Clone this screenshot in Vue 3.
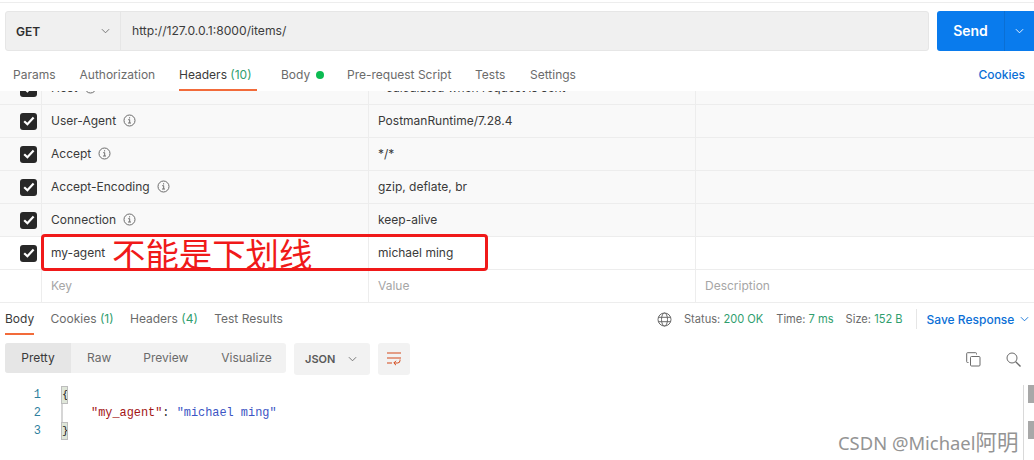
<script setup>
const tabs = [
  { label: 'Params', w: 66.5 },
  { label: 'Authorization', w: 99.5 },
  { label: 'Headers', count: '(10)', active: true, w: 102 },
  { label: 'Body', dot: true, w: 66 },
  { label: 'Pre-request Script', w: 128 },
  { label: 'Tests', w: 55 },
  { label: 'Settings', w: 60 }
]
const rows = [
  { key: 'Host', value: '<calculated when request is sent>', info: true },
  { key: 'User-Agent', value: 'PostmanRuntime/7.28.4', info: true },
  { key: 'Accept', value: '*/*', info: true },
  { key: 'Accept-Encoding', value: 'gzip, deflate, br', info: true },
  { key: 'Connection', value: 'keep-alive', info: true },
  { key: 'my-agent', value: 'michael ming', white: true }
]
</script>

<template>
  <div class="page">
    <div class="topline"></div>
    <div class="urlrow">
      <div class="urlbox">
        <div class="method">
          <span>GET</span>
          <svg class="chev" width="9" height="6" viewBox="0 0 10 6"><path d="M1 1l4 4 4-4" fill="none" stroke="#6b6b6b" stroke-width="1"/></svg>
        </div>
        <div class="url">http://127.0.0.1:8000/items/</div>
      </div>
      <div class="send">
        <span class="sendlabel">Send</span>
        <span class="sendarrow">
          <svg width="9" height="6" viewBox="0 0 10 6"><path d="M1 1l4 4 4-4" fill="none" stroke="#fff" stroke-width="1"/></svg>
        </span>
      </div>
    </div>

    <div class="tabs">
      <div v-for="t in tabs" :key="t.label" class="tab" :class="{ active: t.active }" :style="{ width: t.w + 'px' }">
        <span>{{ t.label }}</span>
        <span v-if="t.count" class="count">&nbsp;{{ t.count }}</span>
        <span v-if="t.dot" class="dot"></span>
      </div>
      <div class="cookies">Cookies</div>
    </div>

    <div class="tablewrap">
      <div class="table">
        <div v-for="r in rows" :key="r.key" class="row" :class="{ white: r.white }">
          <div class="c0"><span class="check"><svg width="12" height="10" viewBox="0 0 12 10"><path d="M1.2 5.2l3.2 3 6.2-6.6" fill="none" stroke="#fff" stroke-width="2.2"/></svg></span></div>
          <div class="c1">
            <span>{{ r.key }}</span>
            <svg v-if="r.info" class="info" width="13" height="13" viewBox="0 0 13 13"><circle cx="6.5" cy="6.5" r="5.5" fill="none" stroke="#6b6b6b"/><path d="M5.2 5.7h1.5v3.2M5 9h3" fill="none" stroke="#6b6b6b"/><rect x="6" y="3.3" width="1.1" height="1.1" fill="#6b6b6b"/></svg>
          </div>
          <div class="c2">{{ r.value }}</div>
          <div class="c3"></div>
        </div>
        <div class="row white ghost">
          <div class="c0"></div>
          <div class="c1">Key</div>
          <div class="c2">Value</div>
          <div class="c3">Description</div>
        </div>
      </div>
      <div class="redbox"></div>
      <div class="redtext">不能是下划线</div>
    </div>

    <div class="restabs">
      <div class="rtab active">Body</div>
      <div class="rtab">Cookies <span class="count">(1)</span></div>
      <div class="rtab">Headers <span class="count">(4)</span></div>
      <div class="rtab">Test Results</div>
      <div class="meta">
        <svg class="globe" width="15" height="15" viewBox="0 0 15 15" fill="none" stroke="#6b6b6b"><circle cx="7.5" cy="7.5" r="6.5"/><ellipse cx="7.5" cy="7.5" rx="3" ry="6.5"/><path d="M1.3 5.3h12.4M1.3 9.7h12.4"/></svg>
        <span class="m m1">Status: <b>200 OK</b></span>
        <span class="m m2">Time: <b>7 ms</b></span>
        <span class="m m3">Size: <b>152 B</b></span>
        <span class="sep"></span>
        <span class="save">Save Response</span>
        <svg width="9" height="6" viewBox="0 0 10 6"><path d="M1 1l4 4 4-4" fill="none" stroke="#0b6fd6" stroke-width="1"/></svg>
      </div>
    </div>

    <div class="toolbar">
      <div class="modes">
        <span class="mode on">Pretty</span>
        <span class="mode raw">Raw</span>
        <span class="mode prev">Preview</span>
        <span class="mode vis">Visualize</span>
      </div>
      <div class="json">
        <span>JSON</span>
        <svg width="9" height="6" viewBox="0 0 10 6"><path d="M1 1l4 4 4-4" fill="none" stroke="#6b6b6b" stroke-width="1"/></svg>
      </div>
      <div class="wrapbtn">
        <svg width="14" height="16" viewBox="0 0 14 16" fill="none" stroke="#d4481a"><path d="M0 2h14M0 7h14M0 12h5"/><path d="M13 8.5v1a2.5 2.5 0 0 1-2.5 2.5H7M9 9.8L6.8 12 9 14.2"/></svg>
      </div>
      <div class="tools">
        <svg width="15" height="15" viewBox="0 0 15 15" fill="none" stroke="#6b6b6b"><rect x="4.5" y="4.5" width="9.5" height="9.5" rx="1"/><path d="M2.5 10.5h-1a.8.8 0 0 1-.8-.8V1.5a.8.8 0 0 1 .8-.8h8.2a.8.8 0 0 1 .8.8v1"/></svg>
        <svg width="15" height="15" viewBox="0 0 15 15" fill="none" stroke="#6b6b6b"><circle cx="6" cy="6" r="5"/><path d="M9.7 9.7l4.8 4.8" stroke-width="1.4"/></svg>
      </div>
    </div>

    <div class="code">
      <div class="gutter"><div>1</div><div>2</div><div>3</div></div>
      <div class="src">
        <div class="guide"></div>
        <div class="ln"><span class="br">{</span></div>
        <div class="ln indent"><span class="k">"my_agent"</span><span class="p">: </span><span class="s">"michael ming"</span></div>
        <div class="ln"><span class="br">}</span></div>
      </div>
    </div>

    <div class="scroll"><i class="t1"></i><i class="t2"></i></div>
    <div class="mark">CSDN @Michael<span class="cjk">阿明</span></div>
  </div>
</template>

<style>
html, body { margin: 0; background: #fff; }
</style>

<style scoped>
.page { position: relative; width: 1034px; height: 460px; overflow: hidden; background: #fff; font-family: Inter, "Noto Sans", sans-serif; font-size: 12px; color: #3a3a3a; }
.topline { height: 1px; margin-top: 2px; background: #ededed; }
.urlrow { display: flex; margin: 8px 0 0 5px; height: 40px; }
.urlbox { display: flex; width: 924px; box-sizing: border-box; background: #f0f0f0; border: 1px solid #e6e6e6; border-radius: 3px; }
.method { width: 115px; box-sizing: border-box; display: flex; align-items: center; justify-content: space-between; padding: 0 10px 0 10px; border-right: 1px solid #e6e6e6; font-weight: 600; color: #2e2e2e; }
.url { padding: 0 11px; line-height: 37px; color: #3c3c3c; font-size: 12.15px; }
.send { display: flex; margin-left: 8px; width: 97px; background: #097bed; border-radius: 3px 0 0 3px; color: #fff; font-weight: 600; font-size: 14px; }
.sendlabel { width: 67px; line-height: 40px; text-align: center; border-right: 1px solid #0a6fd4; }
.sendarrow { flex: 1; display: flex; align-items: center; justify-content: center; }
.tabs { display: flex; height: 40px; padding-left: 13px; position: relative; box-sizing: border-box; }
.tab { display: flex; align-items: center; color: #6b6b6b; height: 38px; padding-top: 9px; box-sizing: border-box; white-space: nowrap; font-size: 12px; position: relative; }
.tab.active { color: #3a3a3a; }
.tab.active::after { content: ""; position: absolute; left: 0; bottom: -2px; width: 78px; height: 2px; background: #f26b3a; }
.count { color: #2f9e6e; }
.dot { width: 8px; height: 8px; border-radius: 50%; background: #0cbb52; margin-left: 6px; }
.cookies { margin-left: auto; margin-right: 9px; padding-top: 10px; line-height: 28px; color: #0b6fd6; font-weight: 500; font-size: 12px; }
.tablewrap { position: relative; height: 212px; overflow: hidden; }
.table { margin-top: -19px; }
.row { display: grid; grid-template-columns: 42px 327px 327px 1fr; height: 33px; box-sizing: border-box; border-bottom: 1px solid #ededed; background: #f9f9f9; align-items: stretch; }
.row.white { background: #fff; }
.row > div { display: flex; align-items: center; box-sizing: border-box; border-right: 1px solid #ededed; }
.c0 { padding-left: 20px; }
.c1, .c2, .c3 { padding: 0 0 1px 9px; }
.c3 { border-right: 0 !important; }
.check { width: 17px; height: 17px; flex: none; background: #282828; border-radius: 3px; display: flex; align-items: center; justify-content: center; }
.info { margin-left: 7px; }
.ghost { color: #a6a6a6; }
.redbox { position: absolute; left: 41px; top: 143px; width: 447px; height: 37px; box-sizing: border-box; border: 3px solid #f01919; border-radius: 4px; }
.redtext { position: absolute; left: 112px; top: 142px; font-family: "Noto Sans CJK SC", sans-serif; font-size: 33.4px; line-height: 40px; color: #f01919; white-space: nowrap; }
.restabs { display: flex; height: 39px; padding-left: 5px; box-sizing: border-box; position: relative; }
.rtab { padding-top: 8px; margin-right: 16.4px; color: #6b6b6b; font-size: 12px; white-space: nowrap; line-height: 15px; position: relative; }
.rtab.active { color: #3a3a3a; }
.rtab.active::after { content: ""; position: absolute; left: 0; right: 0; top: 30px; height: 2px; background: #f26b3a; }
.meta { position: absolute; left: 657px; top: 0; right: 0; height: 31px; padding-top: 1px; display: flex; align-items: center; font-size: 11.1px; color: #6b6b6b; white-space: nowrap; box-sizing: border-box; }
.m b { font-weight: 400; color: #2f9e6e; }
.m1 { margin-left: 12px; }
.m2 { margin-left: 13px; }
.m3 { margin-left: 12px; }
.sep { width: 1px; height: 20px; background: #e6e6e6; margin: 0 10px 0 13px; }
.save { color: #0b6fd6; font-weight: 500; font-size: 12px; margin-right: 6px; }
.toolbar { display: flex; align-items: flex-start; height: 42px; margin-top: 1px; padding-left: 5px; position: relative; }
.modes { display: flex; width: 281px; height: 30px; background: #f2f2f2; border-radius: 3px; line-height: 30px; color: #6b6b6b; font-size: 12px; }
.mode { display: block; }
.mode.on { width: 66px; text-align: center; background: #e6e6e6; color: #3a3a3a; border-radius: 3px 0 0 3px; }
.raw { margin-left: 16px; }
.prev { margin-left: 32px; }
.vis { margin-left: 33px; }
.json { display: flex; align-items: center; justify-content: space-between; width: 76px; height: 32px; box-sizing: border-box; margin-left: 8px; padding: 0 13px 0 11px; background: #f2f2f2; border-radius: 3px; font-weight: 600; font-size: 11px; color: #5a5a5a; }
.wrapbtn { display: flex; align-items: center; justify-content: center; width: 32px; height: 32px; margin-left: 8px; background: #f2f2f2; border-radius: 3px; }
.tools { position: absolute; left: 966px; top: 9px; display: flex; gap: 25px; }
.code { display: flex; font-family: "Liberation Mono", monospace; font-size: 11.9px; line-height: 18px; margin-top: 1px; }
.gutter { width: 41px; text-align: right; color: #2f7f9e; }
.src { position: relative; margin-left: 20px; }
.guide { position: absolute; left: 0; top: 0; width: 2px; height: 53px; background: #d6d6d6; }
.ln { height: 18px; white-space: pre; position: relative; }
.br { display: inline-block; vertical-align: top; width: 7px; height: 18px; box-sizing: border-box; background: #dfe6d9; border: 1px solid #bdbdbd; color: #222; text-align: center; line-height: 16px; overflow: hidden; font-size: 11px; }
.indent { padding-left: 30px; }
.k { color: #a31515; }
.p { color: #333; }
.s { color: #3b55c4; }
.scroll { position: absolute; left: 1023px; top: 385px; bottom: 0; width: 11px; border-left: 1px solid #d9d9d9; }
.scroll i { position: absolute; left: 4px; width: 6px; height: 18px; background: #a8a8a8; }
.t1 { top: 0; }
.t2 { top: 36px; }
.mark { position: absolute; left: 838px; top: 429px; font-family: "Noto Sans", "Noto Sans CJK SC", sans-serif; font-size: 18.4px; line-height: 24px; color: #949494; white-space: nowrap; }
.cjk { font-family: "Noto Sans CJK SC", sans-serif; font-size: 21.5px; }
</style>
